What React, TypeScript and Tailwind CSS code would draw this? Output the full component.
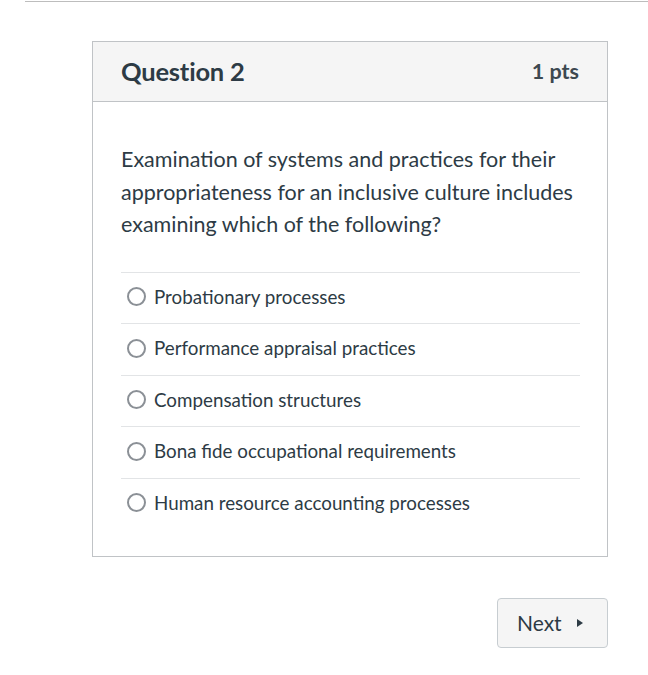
import React from "react";

const options = [
  "Probationary processes",
  "Performance appraisal practices",
  "Compensation structures",
  "Bona fide occupational requirements",
  "Human resource accounting processes",
];

export default function App() {
  return (
    <div
      className="w-[648px] h-[675px] bg-white text-[#2d3b45] overflow-hidden"
      style={{ fontFamily: "Lato, 'Open Sans', sans-serif" }}
    >
      <div className="ml-[25px] mt-px h-px bg-[#bdbdbd]" />
      <div className="ml-[92px] mt-[39px] w-[516px] border border-[#c0c3c6]">
        <div className="h-[60px] bg-[#f5f5f5] border-b border-[#c0c3c6] flex items-center justify-between pl-[28px] pr-[28px]">
          <span className="text-[25.5px] font-bold text-[#2d3b45] tracking-[-0.2px]">Question 2</span>
          <span className="text-[21.5px] font-bold text-[#3d4850]">1 pts</span>
        </div>
        <div className="pl-[28px] pr-[20px] pt-[41px] pb-[27px]">
          <p className="text-[21.5px] leading-[32.5px] text-[#2d3b45]">
            Examination of systems and practices for their appropriateness for an inclusive culture includes examining which of the following?
          </p>
          <div className="mt-[31px] mr-[7px]">
            {options.map((o) => (
              <div key={o} className="border-t border-[#e2e4e6] h-[51.5px] flex items-center pl-[6px] pb-[2px]">
                <span className="w-[19px] h-[19px] rounded-full border-2 border-[#8b9096] bg-white shrink-0" />
                <span className="ml-[8px] text-[18.8px] text-[#2d3b45]">{o}</span>
              </div>
            ))}
          </div>
        </div>
      </div>
      <div className="ml-[497px] mt-[41px] w-[111px] h-[50px] rounded-[4px] border border-[#c7cdd1] bg-[#f5f5f5] flex items-center pl-[19px]">
        <span className="text-[21px] text-[#2d3b45]">Next</span>
        <svg className="ml-[14px]" width="8" height="10" viewBox="0 0 8 10">
          <path d="M1 1 L7 5 L1 9 Z" fill="#2d3b45" />
        </svg>
      </div>
    </div>
  );
}
